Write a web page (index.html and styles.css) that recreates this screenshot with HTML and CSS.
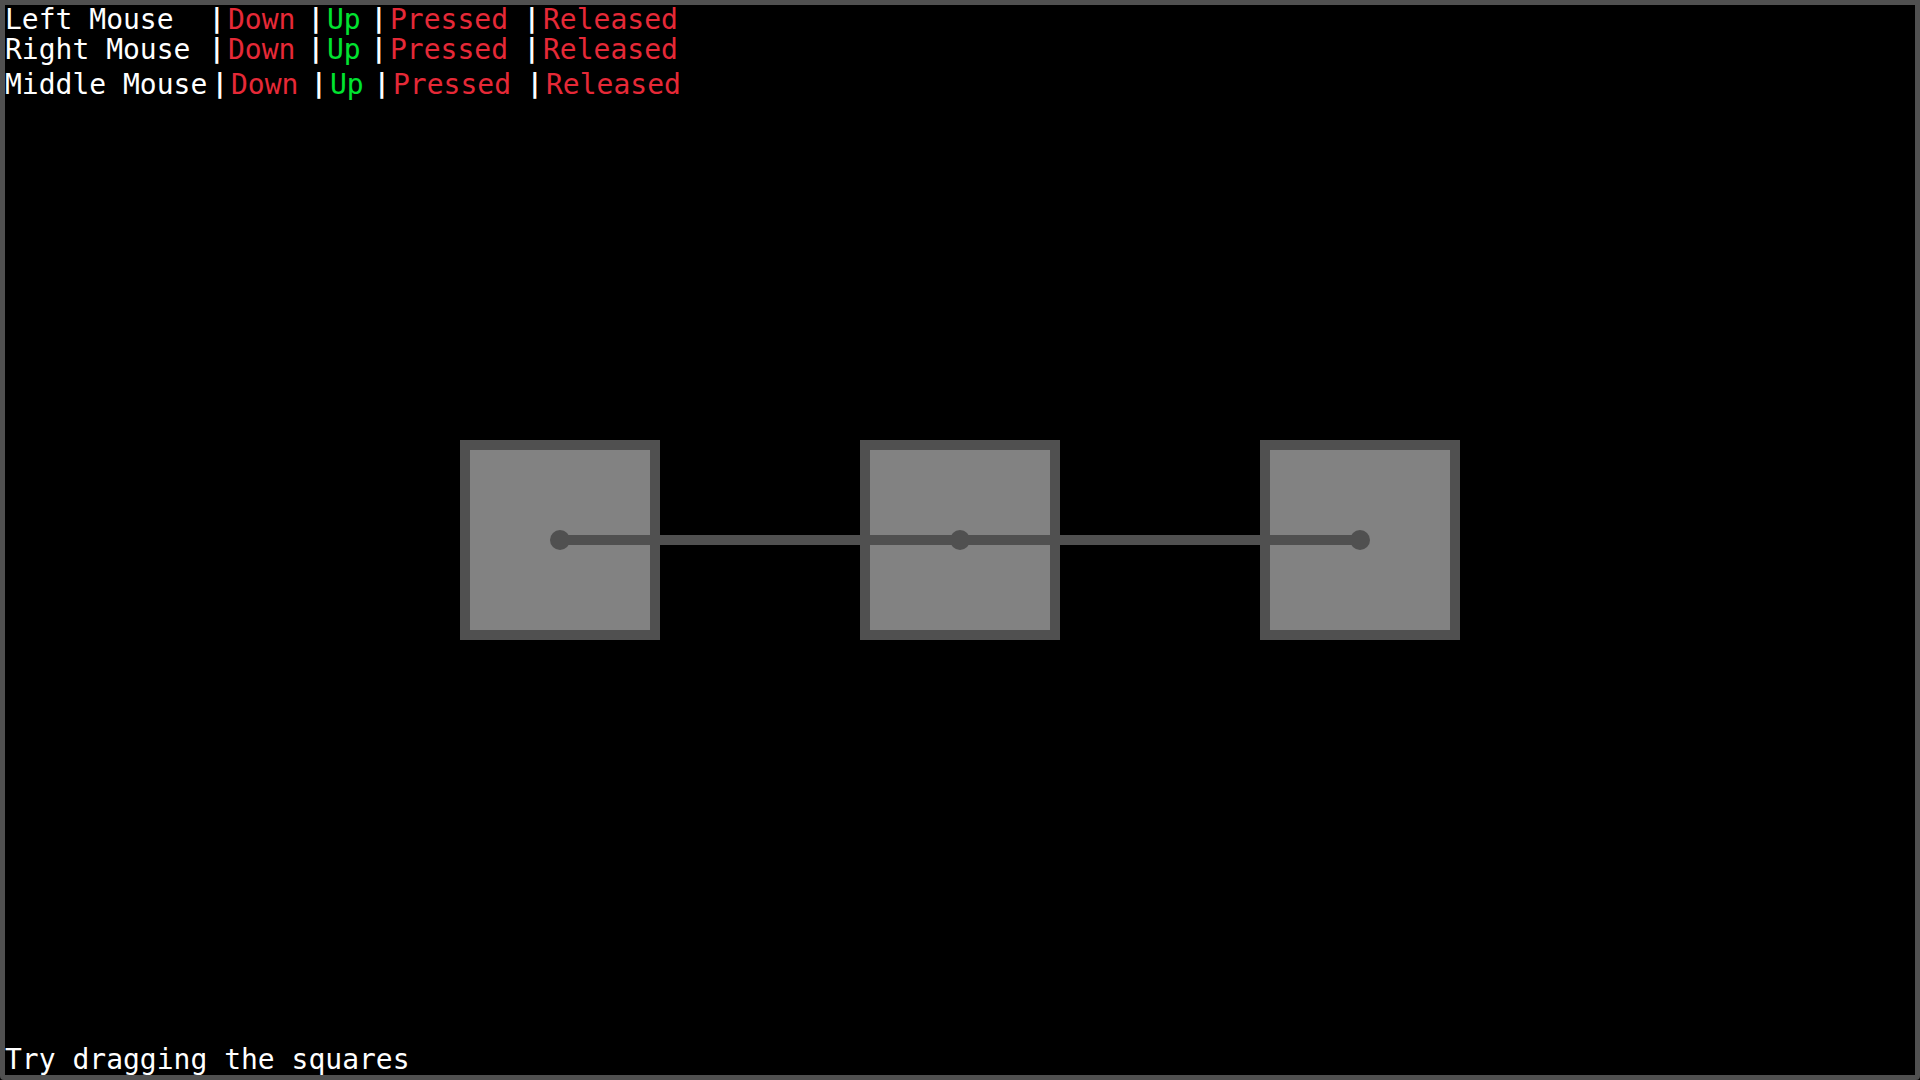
FILE: index.html
```html
<!DOCTYPE html>
<html lang="en">
<head>
<meta charset="utf-8">
<meta name="viewport" content="width=device-width, initial-scale=1">
<title>Mouse Input</title>
<link rel="stylesheet" href="styles.css">
</head>
<body>
<main class="window">
  <section class="status" aria-label="Mouse state">
    <div class="row">
      <span class="label">Left Mouse</span><span class="sep">|</span><span class="down off">Down</span><span class="sep">|</span><span class="up on">Up</span><span class="sep">|</span><span class="pressed off">Pressed</span><span class="sep">|</span><span class="off">Released</span>
    </div>
    <div class="row">
      <span class="label">Right Mouse</span><span class="sep">|</span><span class="down off">Down</span><span class="sep">|</span><span class="up on">Up</span><span class="sep">|</span><span class="pressed off">Pressed</span><span class="sep">|</span><span class="off">Released</span>
    </div>
    <div class="row row-middle">
      <span class="label">Middle Mouse</span><span class="sep">|</span><span class="down off">Down</span><span class="sep">|</span><span class="up on">Up</span><span class="sep">|</span><span class="pressed off">Pressed</span><span class="sep">|</span><span class="off">Released</span>
    </div>
  </section>
  <section class="chain" aria-label="Draggable squares">
    <div class="square"></div>
    <div class="square"></div>
    <div class="square"></div>
  </section>
  <p class="hint">Try dragging the squares</p>
</main>
</body>
</html>
```
FILE: styles.css
```css
:root {
  --dark: #505050;
  --gray: #828282;
  --on: #00e430;
  --off: #e62937;
}

* {
  box-sizing: border-box;
}

body {
  margin: 0;
  background: #000;
  color: #fff;
  font-family: "DejaVu Sans Mono", monospace;
  font-size: 28px;
  line-height: 30px;
}

.window {
  display: grid;
  grid-template-rows: 1fr auto 1fr;
  min-height: 100vh;
  border: 5px solid var(--dark);
  border-radius: 0 0 4px 4px;
}

.row {
  display: flex;
  white-space: nowrap;
}

.label {
  width: 204px;
}

.row-middle {
  padding-top: 5px;
}

.row-middle .label {
  width: 207px;
}

.sep {
  width: 19px;
  font-size: 26px;
  line-height: 26px;
  font-weight: bold;
}

.down {
  width: 80px;
}

.up {
  width: 44px;
}

.pressed {
  width: 134px;
}

.on {
  color: var(--on);
}

.off {
  color: var(--off);
}

.chain {
  position: relative;
  display: flex;
  gap: 200px;
  justify-self: center;
}

/* rod joining the centres of the outer squares */
.chain::after {
  content: "";
  position: absolute;
  top: 95px;
  left: 100px;
  right: 100px;
  height: 10px;
  background: var(--dark);
}

.square {
  display: grid;
  place-items: center;
  width: 200px;
  height: 200px;
  border: 10px solid var(--dark);
  background: var(--gray);
}

.square::after {
  content: "";
  width: 20px;
  height: 20px;
  border-radius: 50%;
  background: var(--dark);
}

.hint {
  align-self: end;
  margin: 0;
}
```
